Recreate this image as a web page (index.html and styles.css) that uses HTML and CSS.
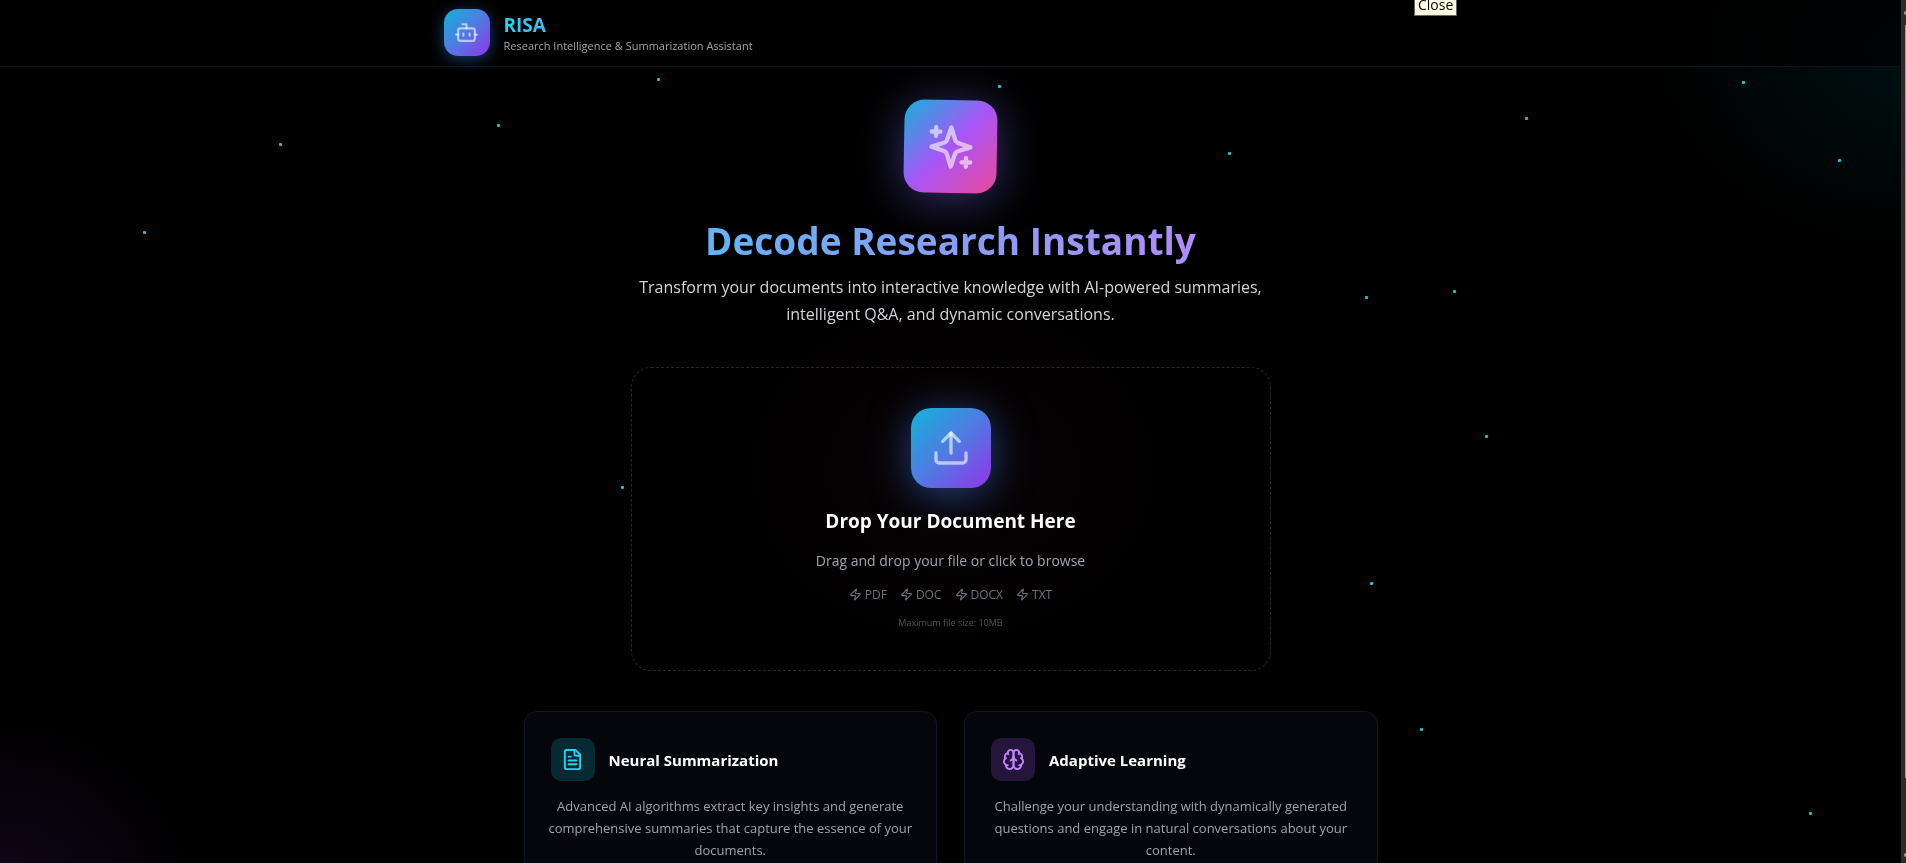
FILE: index.html
```html
<!DOCTYPE html>
<html lang="en">
<head>
<meta charset="utf-8">
<title>RISA</title>
<link rel="stylesheet" href="styles.css">
</head>
<body>
<div class="backdrop" aria-hidden="true">
  <div class="glow glow-cyan"></div>
  <div class="glow glow-purple"></div>
  <div class="glow glow-pink"></div>
  <i class="star" style="left:657px;top:78px"></i>
  <i class="star" style="left:998px;top:85px"></i>
  <i class="star" style="left:497px;top:124px"></i>
  <i class="star" style="left:279px;top:143px"></i>
  <i class="star" style="left:143px;top:231px"></i>
  <i class="star" style="left:1228px;top:152px"></i>
  <i class="star" style="left:1525px;top:117px"></i>
  <i class="star" style="left:1742px;top:81px"></i>
  <i class="star" style="left:1838px;top:159px"></i>
  <i class="star" style="left:1365px;top:296px"></i>
  <i class="star" style="left:1453px;top:290px"></i>
  <i class="star" style="left:1485px;top:435px"></i>
  <i class="star" style="left:621px;top:486px"></i>
  <i class="star" style="left:1370px;top:582px"></i>
  <i class="star" style="left:1420px;top:728px"></i>
  <i class="star" style="left:1809px;top:812px"></i>
</div>
<header class="header">
  <div class="header-inner">
    <div class="logo">
      <svg class="icon icon-bot" viewBox="0 0 24 24"><path d="M12 8V4H8"/><rect width="16" height="12" x="4" y="8" rx="2"/><path d="M2 14h2M20 14h2M15 13v2M9 13v2"/></svg>
    </div>
    <div class="brand">
      <div class="brand-name">RISA</div>
      <div class="brand-sub">Research Intelligence &amp; Summarization Assistant</div>
    </div>
  </div>
</header>
<main class="main">
  <section class="hero">
    <div class="hero-icon">
      <svg class="icon icon-sparkles" viewBox="0 0 24 24"><path d="M12 3l-1.9 5.8a2 2 0 0 1-1.3 1.3L3 12l5.8 1.9a2 2 0 0 1 1.3 1.3L12 21l1.9-5.8a2 2 0 0 1 1.3-1.3L21 12l-5.8-1.9a2 2 0 0 1-1.3-1.3L12 3Z"/><path d="M5 3v4M19 17v4M3 5h4M17 19h4"/></svg>
    </div>
    <h1 class="title">Decode Research Instantly</h1>
    <p class="lead">Transform your documents into interactive knowledge with AI-powered summaries, intelligent Q&amp;A, and dynamic conversations.</p>
  </section>
  <button class="dropzone" type="button">
    <span class="upload">
      <svg class="icon icon-upload" viewBox="0 0 24 24"><path d="M21 15v4a2 2 0 0 1-2 2H5a2 2 0 0 1-2-2v-4"/><path d="m17 8-5-5-5 5"/><path d="M12 3v12"/></svg>
    </span>
    <span class="drop-title">Drop Your Document Here</span>
    <span class="drop-text">Drag and drop your file or click to browse</span>
    <span class="formats">
      <span class="format"><svg class="icon icon-zap" viewBox="0 0 24 24"><path d="M4 14a1 1 0 0 1-.78-1.63l9.9-10.2a.5.5 0 0 1 .86.46l-1.92 6.02A1 1 0 0 0 13 10h7a1 1 0 0 1 .78 1.63l-9.9 10.2a.5.5 0 0 1-.86-.46l1.92-6.02A1 1 0 0 0 11 14z"/></svg>PDF</span>
      <span class="format"><svg class="icon icon-zap" viewBox="0 0 24 24"><path d="M4 14a1 1 0 0 1-.78-1.63l9.9-10.2a.5.5 0 0 1 .86.46l-1.92 6.02A1 1 0 0 0 13 10h7a1 1 0 0 1 .78 1.63l-9.9 10.2a.5.5 0 0 1-.86-.46l1.92-6.02A1 1 0 0 0 11 14z"/></svg>DOC</span>
      <span class="format"><svg class="icon icon-zap" viewBox="0 0 24 24"><path d="M4 14a1 1 0 0 1-.78-1.63l9.9-10.2a.5.5 0 0 1 .86.46l-1.92 6.02A1 1 0 0 0 13 10h7a1 1 0 0 1 .78 1.63l-9.9 10.2a.5.5 0 0 1-.86-.46l1.92-6.02A1 1 0 0 0 11 14z"/></svg>DOCX</span>
      <span class="format"><svg class="icon icon-zap" viewBox="0 0 24 24"><path d="M4 14a1 1 0 0 1-.78-1.63l9.9-10.2a.5.5 0 0 1 .86.46l-1.92 6.02A1 1 0 0 0 13 10h7a1 1 0 0 1 .78 1.63l-9.9 10.2a.5.5 0 0 1-.86-.46l1.92-6.02A1 1 0 0 0 11 14z"/></svg>TXT</span>
    </span>
    <span class="limit">Maximum file size: 10MB</span>
  </button>
  <section class="features">
    <article class="card">
      <div class="card-head">
        <div class="card-icon cyan">
          <svg class="icon icon-card" viewBox="0 0 24 24"><path d="M15 2H6a2 2 0 0 0-2 2v16a2 2 0 0 0 2 2h12a2 2 0 0 0 2-2V7Z"/><path d="M14 2v4a2 2 0 0 0 2 2h4"/><path d="M10 9H8M16 13H8M16 17H8"/></svg>
        </div>
        <h2 class="card-title">Neural Summarization</h2>
      </div>
      <p class="card-text">Advanced AI algorithms extract key insights and generate comprehensive summaries that capture the essence of your documents.</p>
    </article>
    <article class="card">
      <div class="card-head">
        <div class="card-icon purple">
          <svg class="icon icon-card" viewBox="0 0 24 24"><path d="M12 5a3 3 0 1 0-5.997.125 4 4 0 0 0-2.526 5.77 4 4 0 0 0 .556 6.588A4 4 0 1 0 12 18Z"/><path d="M12 5a3 3 0 1 1 5.997.125 4 4 0 0 1 2.526 5.77 4 4 0 0 1-.556 6.588A4 4 0 1 1 12 18Z"/><path d="M15 13a4.5 4.5 0 0 1-3-4 4.5 4.5 0 0 1-3 4"/><path d="M17.599 6.5a3 3 0 0 0 .399-1.375M6.003 5.125A3 3 0 0 0 6.401 6.5M3.477 10.896a4 4 0 0 1 .585-.396M19.938 10.5a4 4 0 0 1 .585.396M6 18a4 4 0 0 1-1.967-.516M19.967 17.484A4 4 0 0 1 18 18"/></svg>
        </div>
        <h2 class="card-title">Adaptive Learning</h2>
      </div>
      <p class="card-text">Challenge your understanding with dynamically generated questions and engage in natural conversations about your content.</p>
    </article>
  </section>
</main>
<div class="tooltip" role="tooltip">Close</div>
<div class="scrollbar" aria-hidden="true"><i class="arrow"></i><i class="thumb"></i><i class="arrow"></i></div>
</body>
</html>
```
FILE: styles.css
```css
* { box-sizing: border-box; }
body {
  margin: 0;
  height: 100vh;
  overflow: hidden;
  padding-right: 5px;
  background: #000;
  color: #fff;
  font-family: "Open Sans", "Noto Sans", sans-serif;
}
h1, h2, p { margin: 0; }
.icon {
  display: block;
  fill: none;
  stroke: currentColor;
  stroke-width: 2;
  stroke-linecap: round;
  stroke-linejoin: round;
}

.backdrop { position: fixed; inset: 0; z-index: -1; overflow: hidden; }
.glow { position: absolute; border-radius: 50%; }
.glow-cyan {
  width: 500px; height: 400px; top: -150px; right: -250px;
  background: radial-gradient(closest-side, #001012, transparent);
}
.glow-purple {
  width: 400px; height: 380px; bottom: -230px; left: -200px;
  background: radial-gradient(closest-side, #12061c, transparent);
}
.glow-pink {
  width: 480px; height: 400px; top: 270px; left: calc(50% - 240px);
  background: radial-gradient(closest-side, #0a0306, transparent);
}
.star { position: absolute; width: 3px; height: 3px; border-radius: 1px; background: #1fc3dc; }

.header { border-bottom: 1px solid #0d131b; background: rgba(0, 0, 0, .7); }
.header-inner {
  display: flex;
  align-items: center;
  gap: 14px;
  max-width: 1014px;
  margin: 0 auto;
  padding: 9px 0 10px;
}
.logo {
  display: grid;
  place-items: center;
  width: 46px;
  height: 47px;
  border-radius: 14px;
  color: rgba(255, 255, 255, .6);
  background: linear-gradient(135deg, #14b1d9, #4f7be2 50%, #9333ea);
  box-shadow: 0 3px 16px rgba(59, 130, 246, .45);
}
.icon-bot { width: 25px; height: 25px; }
.brand { padding-top: 2px; }
.brand-name {
  width: max-content;
  font-size: 19px;
  line-height: 24px;
  font-weight: 700;
  color: transparent;
  background: linear-gradient(90deg, #22d3ee, #45bdf4);
  background-clip: text;
  -webkit-background-clip: text;
}
.brand-sub { font-size: 11px; line-height: 17px; color: #9ca3af; }

.main { display: flex; flex-direction: column; align-items: center; padding-top: 33px; }
.hero { display: flex; flex-direction: column; align-items: center; text-align: center; }
.hero-icon {
  display: grid;
  place-items: center;
  width: 93px;
  height: 93px;
  border-radius: 20px;
  color: rgba(255, 255, 255, .6);
  background: linear-gradient(135deg, #14b3da, #a855f7 50%, #ec4899);
  box-shadow: 0 6px 48px rgba(120, 110, 246, .45);
  transform: rotate(1deg);
}
.icon-sparkles { width: 52px; height: 52px; }
.title {
  margin-top: 21px;
  font-size: 37px;
  line-height: 54px;
  font-weight: 700;
  color: transparent;
  background: linear-gradient(90deg, #60b5f5, #8f9bf8 60%, #b08cfa);
  background-clip: text;
  -webkit-background-clip: text;
}
.lead { max-width: 640px; margin-top: 6px; font-size: 16px; line-height: 27px; color: #d1d5db; }

.dropzone {
  display: flex;
  flex-direction: column;
  align-items: center;
  width: 640px;
  max-width: 100%;
  margin-top: 39px;
  padding: 40px;
  border: 1px dashed #25282f;
  border-radius: 20px;
  background: none;
  color: inherit;
  font: inherit;
}
.upload {
  display: grid;
  place-items: center;
  width: 80px;
  height: 80px;
  border-radius: 20px;
  color: rgba(255, 255, 255, .6);
  background: linear-gradient(135deg, #12b2d9, #4f7be2 50%, #9333ea);
  box-shadow: 0 6px 40px rgba(59, 130, 246, .5);
}
.icon-upload { width: 40px; height: 40px; }
.drop-title { margin-top: 20px; font-size: 19px; line-height: 27px; font-weight: 700; }
.drop-text { margin-top: 16px; font-size: 14px; line-height: 20px; color: #9ca3af; }
.formats { display: flex; gap: 13px; margin-top: 15px; font-size: 12px; line-height: 17px; color: #6b7280; }
.format { display: flex; align-items: center; gap: 3px; }
.icon-zap { width: 13px; height: 13px; }
.limit { margin-top: 13px; font-size: 9px; line-height: 14px; color: #4b5563; }

.features {
  display: grid;
  grid-template-columns: 1fr 1fr;
  gap: 27px;
  width: 100%;
  max-width: 854px;
  margin-top: 40px;
}
.card { padding: 26px; border: 1px solid #111621; border-radius: 13px; background: #05060b; }
.card-head { display: flex; align-items: center; gap: 14px; }
.card-icon { display: grid; place-items: center; width: 44px; height: 43px; border-radius: 10px; }
.cyan { color: #22d3ee; background: #052a32; }
.purple { color: #c084fc; background: #26153a; }
.icon-card { width: 23px; height: 23px; }
.card-title { font-size: 15px; line-height: 24px; font-weight: 700; }
.card-text { margin: 14px -10px 0; font-size: 13px; line-height: 22px; text-align: center; color: #9ca3af; }

.tooltip {
  position: fixed;
  top: -3px;
  left: 1414px;
  padding: 0 3px 3px;
  border: 1px solid #646464;
  background: #ffffe1;
  color: #000;
  font-size: 14px;
  line-height: 14px;
}
.scrollbar {
  position: fixed;
  top: 0;
  right: 0;
  bottom: 0;
  width: 5px;
  display: flex;
  flex-direction: column;
  align-items: flex-end;
  padding: 11px 0 6px;
  background: #2c2c2c;
}
.arrow { width: 2px; height: 4px; border-radius: 2px 0 0 2px; background: #9f9f9f; }
.thumb { width: 1px; flex: 0 0 89%; margin: 10px 0 auto; background: #9f9f9f; }
```
